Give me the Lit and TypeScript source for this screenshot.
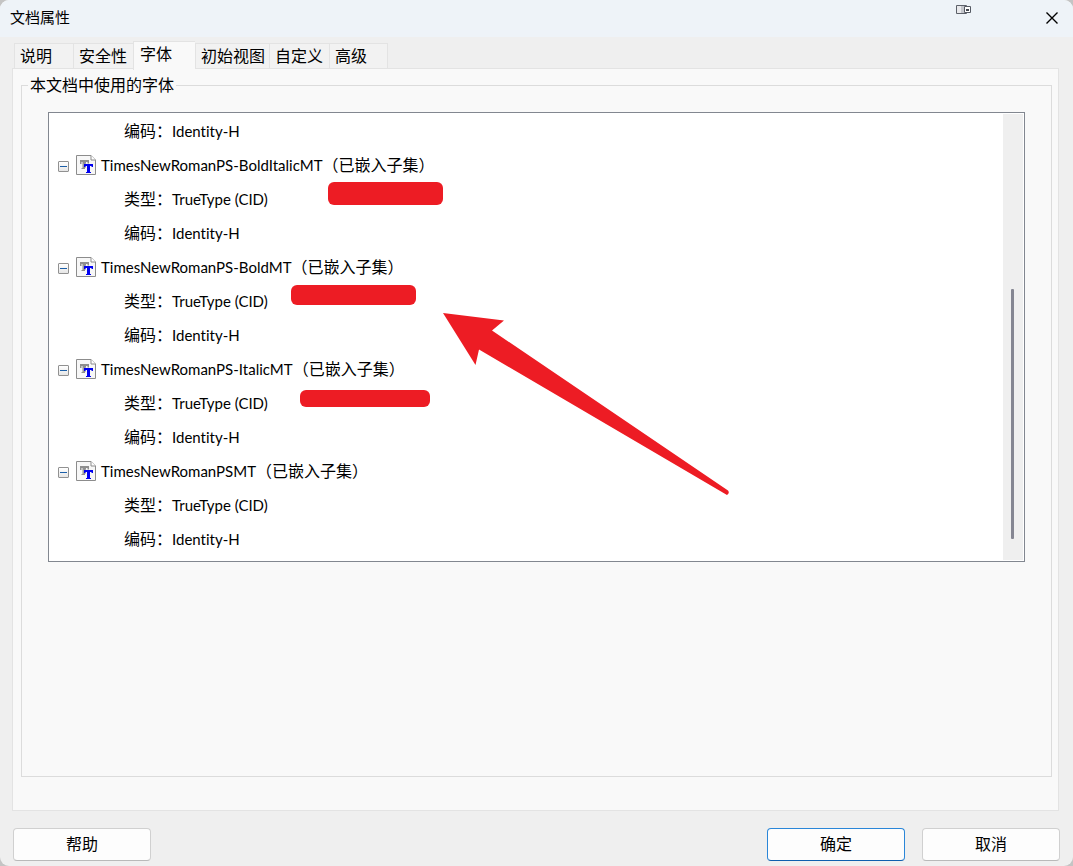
import { LitElement, html, css, svg } from "lit";
import { customElement, state } from "lit/decorators.js";
import { classMap } from "lit/directives/class-map.js";

interface FontEntry {
  name: string;
  type: string;
  encoding: string;
}

const TABS = ["说明", "安全性", "字体", "初始视图", "自定义", "高级"];

const FONTS: FontEntry[] = [
  { name: "TimesNewRomanPS-BoldItalicMT", type: "TrueType (CID)", encoding: "Identity-H" },
  { name: "TimesNewRomanPS-BoldMT", type: "TrueType (CID)", encoding: "Identity-H" },
  { name: "TimesNewRomanPS-ItalicMT", type: "TrueType (CID)", encoding: "Identity-H" },
  { name: "TimesNewRomanPSMT", type: "TrueType (CID)", encoding: "Identity-H" },
];

const fontIcon = svg`
  <path d="M0.5 0.5H15L19.5 5V19.5H0.5Z" fill="#f7f7f7" stroke="#8c8c8c"/>
  <path d="M15 0.5V5H19.5" fill="#fff" stroke="#8c8c8c"/>
  <path d="M4 5H13V8.500H11.500V7H10V8.500H7.800V12.500H9V14H5.500V13H6.500V7H5.500V9H4Z" fill="#8e8e8e"/>
  <path d="M7.800 7V13H9.500V7Z" fill="#8e8e8e"/>
  <path d="M8 9H17V12H15.500V11H14V17H15V18H10V17H11V11H9.500V12H8Z" fill="#0000f0"/>`;

@customElement("font-tree")
export class FontTree extends LitElement {
  static styles = css`
    :host {
      display: flex;
      position: relative;
      background: #fff;
      border: 1px solid #828790;
      color: #000;
    }
    .tree {
      flex: 1;
      min-width: 0;
      margin: 0;
      padding: 1px 0 5px;
      list-style: none;
    }
    .group {
      margin: 0;
      padding: 0;
      list-style: none;
    }
    .row {
      display: flex;
      align-items: center;
      height: 34px;
      white-space: nowrap;
    }
    .detail {
      padding-left: 75px;
    }
    .latin {
      font-family: Lato, "Noto Sans CJK SC", sans-serif;
      font-size: 15px;
      font-variant-ligatures: none;
    }
    .toggle {
      width: 11px;
      height: 11px;
      margin: 2px 7px 0 9px;
      padding: 0;
      border: 1px solid #919191;
      border-radius: 1px;
      background: linear-gradient(#fff, #e6e6e6);
      display: grid;
      place-items: center;
    }
    .minus {
      width: 7px;
      height: 1px;
      background: #1c5fa8;
    }
    .icon {
      width: 20px;
      height: 20px;
      margin-right: 5px;
    }
    .track {
      box-sizing: border-box;
      width: 20px;
      margin: 1px 1px 1px 0;
      padding-right: 1px;
      background: #efefef;
      display: grid;
      grid-template-rows: 175fr 250fr 21fr;
      justify-items: center;
    }
    .thumb {
      grid-row: 2;
      width: 3px;
      border-radius: 1px;
      background: #858692;
    }
    .marks {
      position: absolute;
      left: 0;
      top: 0;
      width: 700px;
      height: 448px;
      pointer-events: none;
    }
  `;

  private detail(label: string, value: string) {
    return html`<li class="row detail"><span>${label}：</span><span class="latin">${value}</span></li>`;
  }

  render() {
    return html`
      <ul class="tree">
        ${this.detail("编码", "Identity-H")}
        ${FONTS.map(
          (f) => html`<li>
            <div class="row">
              <button class="toggle" aria-label="折叠" aria-expanded="true"><span class="minus"></span></button>
              <svg class="icon" viewBox="0 0 20 20" aria-hidden="true">${fontIcon}</svg>
              <span class="latin">${f.name}</span><span>（已嵌入子集）</span>
            </div>
            <ul class="group">
              ${this.detail("类型", f.type)} ${this.detail("编码", f.encoding)}
            </ul>
          </li>`
        )}
      </ul>
      <div class="track"><div class="thumb"></div></div>
      <svg class="marks" viewBox="0 0 700 448" fill="#ed1c24" aria-hidden="true">
        <rect x="279" y="69" width="115" height="23" rx="6" />
        <rect x="242" y="172" width="125" height="20" rx="6" />
        <rect x="251" y="277" width="130" height="17" rx="6" />
        <path d="M394 200L455 207.500L443 217.500L679 377.500Q681 380 678 382L430 236.500L426.500 252Z" />
      </svg>
    `;
  }
}

@customElement("app-root")
export class AppRoot extends LitElement {
  static styles = css`
    :host {
      display: block;
      background: #c4c4c4;
      color: #000;
      font-family: "Open Sans", "Noto Sans CJK SC", sans-serif;
      font-size: 16px;
      line-height: 22px;
    }
    * {
      box-sizing: border-box;
    }
    button {
      font: inherit;
      color: inherit;
    }
    .window {
      display: flex;
      flex-direction: column;
      min-height: 100vh;
      background: #efefef;
      border-radius: 9px;
      overflow: hidden;
    }
    .titlebar {
      display: flex;
      align-items: center;
      height: 37px;
      padding: 0 14px 2px 10px;
      background: #eef3f8;
    }
    .title {
      flex: 1;
      margin: 0;
      padding-bottom: 2px;
      font-size: 15px;
      font-weight: 400;
    }
    .dock {
      align-self: flex-start;
      width: 16px;
      height: 10px;
      margin: 5px 73px 0 0;
    }
    .close {
      display: grid;
      width: 14px;
      height: 14px;
      padding: 0;
      border: 0;
      background: none;
    }
    .tabs {
      display: flex;
      align-items: flex-end;
      height: 32px;
      padding-left: 14px;
    }
    .tab {
      min-width: 60px;
      height: 26px;
      padding: 0 4px 2px 5px;
      border: 1px solid #e3e3e3;
      border-width: 1px 0 0 1px;
      background: #f2f2f2;
      text-align: left;
      white-space: nowrap;
    }
    .tab:first-child {
      min-width: 59px;
    }
    .tab:last-child {
      min-width: 59px;
      border-right-width: 1px;
    }
    .tab.active {
      min-width: 62px;
      height: 29px;
      padding: 0 6px 5px;
      margin-bottom: -1px;
      background: #f9f9f9;
      z-index: 1;
    }
    .panel {
      flex: 1;
      display: flex;
      flex-direction: column;
      margin: -1px 14px 0 12px;
      padding: 5px 6px 33px 8px;
      background: #f9f9f9;
      border: 1px solid #e3e3e3;
    }
    .fonts {
      flex: 1;
      min-width: 0;
      margin: 0;
      padding: 16px 26px;
      border: 1px solid #dcdcdc;
    }
    .legend {
      margin-left: -20px;
      padding: 0 2px;
    }
    .actions {
      display: flex;
      gap: 17px;
      padding: 17px 13px 5px;
    }
    .action {
      width: 138px;
      height: 33px;
      padding: 0 0 2px;
      border: 1px solid #d0d0d0;
      border-bottom-color: #b9b9b9;
      border-radius: 4px;
      background: #fdfdfd;
    }
    .help {
      margin-right: auto;
    }
    .primary {
      border-color: #2a86d8;
      border-bottom-color: #0f5fae;
    }
  `;

  @state() private active = 2;

  render() {
    return html`
      <main class="window">
        <header class="titlebar">
          <h1 class="title">文档属性</h1>
          <svg class="dock" viewBox="0 0 16 10" aria-hidden="true">
            <path d="M0.500 .5H10.500V8.500H0.500Z" fill="#e9e9ec" stroke="#5c6069" />
            <path d="M5 1H8V8H5Z" fill="#c4c6cc" />
            <path d="M8.500 1.500H14.500V7.500H8.500Z" fill="#fff" stroke="#555963" />
            <path d="M10 4H13V6H10Z" fill="#444851" />
          </svg>
          <button class="close" aria-label="关闭">
            <svg width="14" height="14" viewBox="0 0 14 14" aria-hidden="true">
              <path d="M1.500 1.500L12.500 12.500M12.500 1.500L1.500 12.500" stroke="#000" stroke-width="1.400" />
            </svg>
          </button>
        </header>
        <nav class="tabs" role="tablist">
          ${TABS.map(
            (t, i) => html`<button
              role="tab"
              class=${classMap({ tab: true, active: i === this.active })}
              aria-selected=${i === this.active ? "true" : "false"}
              @click=${() => (this.active = i)}
            >${t}</button>`
          )}
        </nav>
        <section class="panel" role="tabpanel">
          <fieldset class="fonts">
            <legend class="legend">本文档中使用的字体</legend>
            <font-tree></font-tree>
          </fieldset>
        </section>
        <footer class="actions">
          <button class="action help">帮助</button>
          <button class="action primary">确定</button>
          <button class="action">取消</button>
        </footer>
      </main>
    `;
  }
}
